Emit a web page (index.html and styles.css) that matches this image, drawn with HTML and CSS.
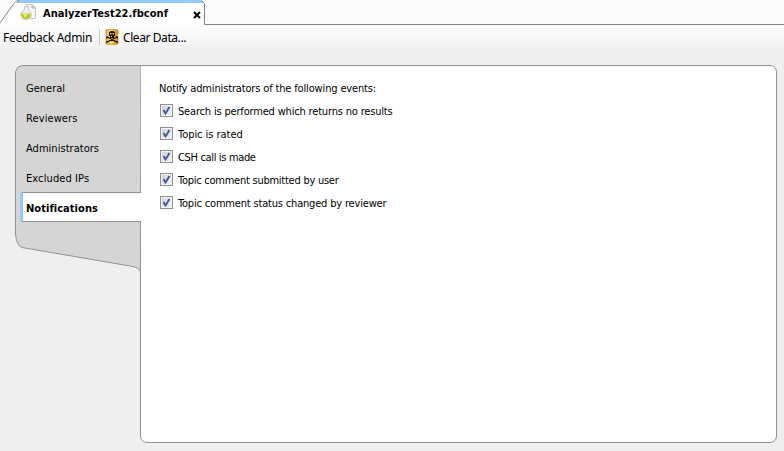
FILE: index.html
```html
<!DOCTYPE html>
<html lang="en">
<head>
<meta charset="utf-8">
<title>Feedback Admin</title>
<link rel="stylesheet" href="styles.css">
</head>
<body>
<header class="tabbar">
  <div class="doc-tab">
    <svg class="tab-shape" width="205" height="26" viewBox="0 0 205 26">
      <path d="M0 26V23L13.500 4Q16 .5 19 .5H201.500L204.500 3.500V26Z" fill="#fff"/>
      <path d="M18 0H201L204 3H16Z" fill="#94c9fd"/>
      <path d="M0 23L13.500 4Q16 .5 19 .5M201.500 .5L204.500 3.500V24.500" fill="none" stroke="#858585"/>
    </svg>
    <svg class="doc-icon" width="17" height="17" viewBox="0 0 17 17">
      <path d="M6.500 .5H12.500L15.500 3.500V14.500H6.500Z" fill="#f7f7f7" stroke="#c4c4c4"/>
      <path d="M12 .5V4H15.500" fill="#ddd" stroke="#aaa"/>
      <path d="M4.500 2.500H8.500V6Q11.500 7.500 11.500 10.500Q11 15.500 6 15.500Q1 15.500 .5 10.500Q.5 7.500 4.500 6Z" fill="#eef1f3" stroke="#c4c9cc"/>
      <path d="M1 9.500H11Q10.800 15 6 15Q1.300 15 1 9.500Z" fill="#bfc923"/>
      <path d="M2.500 10H8L5 13.500Z" fill="#edea72"/>
    </svg>
    <span class="doc-title">AnalyzerTest22.fbconf</span>
    <svg class="close" width="8" height="8" viewBox="0 0 8 8"><path d="M1 1L7 7M7 1L1 7" stroke="#000" stroke-width="2"/></svg>
  </div>
</header>
<nav class="toolbar">
  <span class="tool-label admin">Feedback Admin</span>
  <i class="separator"></i>
  <svg class="skull" width="14" height="16" viewBox="0 0 14 16">
    <defs><linearGradient id="gold"><stop stop-color="#e2a51d"/><stop offset=".35" stop-color="#ffe477"/><stop offset="1" stop-color="#c98200"/></linearGradient></defs>
    <path d="M1 1Q7-.5 13 1V5L12 6L13 8V15Q7 16.500 1 15V8L2 6L1 5Z" fill="url(#gold)" stroke="#c58a12" stroke-width=".7"/>
    <path d="M4 3H5V2H9V3H10V7H9V9H5V7H4Z" fill="#171200"/>
    <path d="M5 4H6.500V5.500H5ZM7.500 4H9V5.500H7.500ZM6 7H7V8H6Z" fill="#f8cf4e"/>
    <path d="M1.500 7.500L12.500 13.500M12.500 7.500L1.500 13.500M1 8.500H3M11 8.500H13M2 12V14M12 12V14" stroke="#171200" stroke-width="1.300"/>
  </svg>
  <span class="tool-label clear">Clear Data...</span>
</nav>
<main class="workspace">
  <aside class="sidebar">
    <svg class="side-shape" width="126" height="210" viewBox="0 0 126 210">
      <path d="M126 .5H6.500L2.500 2.500L.5 6.500V169Q1.500 180.500 7 182.500L118 201.500Q124 203 125.500 207Z" fill="#d5d5d5" stroke="#919191"/>
    </svg>
    <ul class="menu">
      <li>General</li>
      <li class="reviewers">Reviewers</li>
      <li class="admins">Administrators</li>
      <li class="ips">Excluded IPs</li>
      <li class="selected">Notifications</li>
    </ul>
  </aside>
  <section class="content">
    <p class="heading">Notify administrators of the following events:</p>
    <label class="option search"><input type="checkbox" checked><span>Search is performed which returns no results</span></label>
    <label class="option rated"><input type="checkbox" checked><span>Topic is rated</span></label>
    <label class="option call"><input type="checkbox" checked><span>CSH call is made</span></label>
    <label class="option submitted"><input type="checkbox" checked><span>Topic comment submitted by user</span></label>
    <label class="option status"><input type="checkbox" checked><span>Topic comment status changed by reviewer</span></label>
  </section>
</main>
</body>
</html>
```
FILE: styles.css
```css
* { box-sizing: border-box; }
body { margin: 0; width: 784px; height: 451px; overflow: hidden; background: #efefef; color: #000; font-family: "DejaVu Sans Condensed", "DejaVu Sans", sans-serif; font-stretch: condensed; font-size: 11px; }
svg { display: block; flex: none; }

.tabbar { height: 25px; background: #fcfcfc; border-bottom: 1px solid #858585; }
.doc-tab { position: relative; display: flex; width: 205px; height: 25px; padding-left: 20px; }
.tab-shape { position: absolute; left: 0; top: 0; }
.doc-icon { position: relative; margin-top: 4px; }
.doc-title { position: relative; width: 126px; margin-left: 6px; line-height: 27px; font-weight: 700; letter-spacing: .041px; white-space: nowrap; }
.close { position: relative; margin: 11px 0 0 24px; }

.toolbar { display: flex; height: 40px; padding-left: 3px; background: linear-gradient(#fdfdfd, #efefef 27px); }
.tool-label { font: 12px/25px "Noto Sans", sans-serif; white-space: nowrap; }
.admin { width: 89px; letter-spacing: -.309px; }
.separator { width: 1px; height: 16px; margin: 4px 5px 0 7px; background: #c5c5c5; }
.skull { margin-top: 4px; }
.clear { margin-left: 4px; letter-spacing: -.421px; }

.workspace { display: flex; padding-left: 15px; height: 378px; }
.sidebar { position: relative; width: 125px; }
.side-shape { position: absolute; left: 0; top: 0; }
.menu { position: relative; margin: 0; padding: 9px 0 0; list-style: none; }
.menu li { height: 30px; padding-left: 11px; line-height: 30px; white-space: nowrap; }
.menu .reviewers { letter-spacing: .1px; }
.menu .admins { letter-spacing: .029px; }
.menu .ips { letter-spacing: .1px; }
.menu .selected { position: relative; z-index: 1; width: 121px; height: 30px; margin: -2px 0 0 5px; padding-left: 3px; line-height: 31px; background: #fff; border: solid #919191; border-width: 1px 0; border-left: 3px solid #94c9fd; border-radius: 2px 0 0 2px; font-weight: 700; letter-spacing: .05px; }

.content { width: 637px; height: 378px; padding: 12px 0 0 19px; background: #fff; border: 1px solid #919191; border-radius: 0 7px 7px 7px; }
.heading { margin: 0 0 0 -1px; height: 22px; line-height: 21px; letter-spacing: -.151px; }
.option { display: flex; height: 23px; line-height: 23px; white-space: nowrap; }
.option input { appearance: none; width: 13px; height: 13px; margin: 4px 5px 0 0; border: 1px solid #8e8f8f; background: url("data:image/svg+xml,%3Csvg xmlns='http://www.w3.org/2000/svg' viewBox='0 0 11 11'%3E%3Cpath d='M2.500 5L4.500 8.500L8.500 2' fill='none' stroke='%23435899' stroke-width='1.900'/%3E%3C/svg%3E") center / 11px 11px, linear-gradient(135deg, #cbcfd5, #f6f6f6); box-shadow: inset 0 0 0 1px #f4f4f4; }
.search { letter-spacing: -.175px; }
.rated { letter-spacing: -.04px; }
.call { letter-spacing: -.34px; }
.submitted { letter-spacing: -.25px; }
.status { letter-spacing: -.18px; }
```
